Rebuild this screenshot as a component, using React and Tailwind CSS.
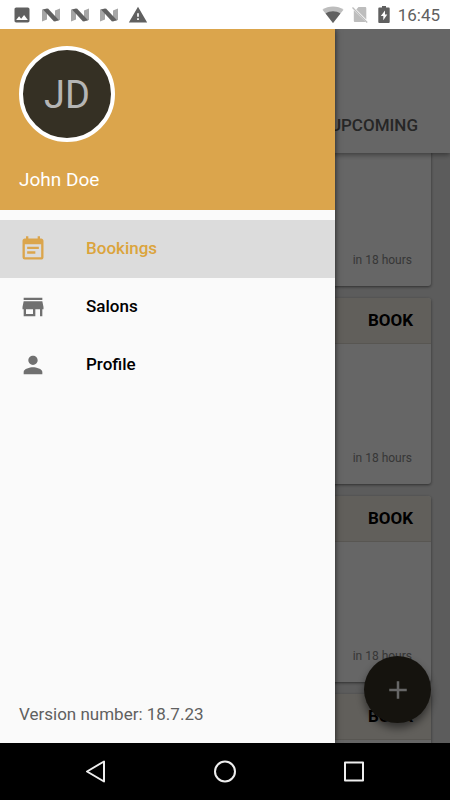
import { MdAdd, MdEventNote, MdImage, MdPerson, MdStore, MdWarning } from "react-icons/md";

function NIcon() {
  return (
    <svg viewBox="0 0 18 14" className="h-[14px] w-[18px]" aria-hidden="true">
      <path d="M0 1.500 5 .5V11.500L0 13.500zM13 2.500 18 .5V12l-5 1.500z" fill="#a6a6a6" />
      <path d="M1 1.500 6 .5 17 12.200l-5 1.300z" fill="#606060" />
    </svg>
  );
}

function StatusBar() {
  return (
    <header className="flex h-[29px] shrink-0 items-center justify-between bg-white pr-[10px] pl-3 text-[#606060]">
      <div className="flex items-center gap-[10px]">
        <MdImage className="h-5 w-5" />
        <div className="flex gap-[11px]">
          <NIcon />
          <NIcon />
          <NIcon />
        </div>
        <MdWarning className="h-5 w-5" />
      </div>
      <div className="flex items-center gap-2">
        <svg viewBox="0 0 22 17" className="h-[17px] w-[22px]" aria-hidden="true">
          <path d="M.5 3.800C3.500 1.600 7 .5 11 .5s7.500 1.100 10.500 3.300L11 17z" fill="#bdbdbd" />
          <path d="M3.600 7.500C5.800 6 8.200 5.200 11 5.200s5.200.8 7.400 2.300L11 17z" fill="#606060" />
        </svg>
        <svg viewBox="0 0 16 17" className="h-[17px] w-4" aria-hidden="true">
          <path d="M4.300 3.400 6.500 1H13c.8 0 1.300.5 1.300 1.300v11.200zM1.800 4.200 13.800 16H3.100c-.8 0-1.300-.5-1.300-1.300z" fill="#bdbdbd" />
          <path d="M.5 1.500 15.200 16.500" stroke="#bdbdbd" strokeWidth="1.300" />
        </svg>
        <svg viewBox="0 0 12 17" className="ml-[2px] h-[17px] w-3" aria-hidden="true">
          <path d="M4 0h4v1.500h2.700c.5 0 1 .5 1 1V16c0 .5-.5 1-1 1H1.300c-.5 0-1-.5-1-1V2.500c0-.5.5-1 1-1H4z" fill="#606060" />
          <path d="M7 4.500 2.800 10h2.500v4.200L9.300 8.500H7z" fill="#fff" />
        </svg>
        <time className="text-[17px] leading-5">16:45</time>
      </div>
    </header>
  );
}

function BookingCard() {
  return (
    <article className="flex h-[186px] shrink-0 flex-col rounded-[3px] bg-white shadow-[0_1px_3px_rgba(0,0,0,0.5)]">
      <div className="flex h-[46px] items-center justify-end rounded-t-[3px] border-b border-[#dcd8ce] bg-[#f3eee4] pr-[18px]">
        <button type="button" className="pb-[2px] text-[17px] leading-5 font-bold text-black">BOOK</button>
      </div>
      <p className="mt-auto pr-[19px] pb-[17px] text-right text-xs leading-[18px] text-[#8a8a8a]">in 18 hours</p>
    </article>
  );
}

function BookingsPage() {
  return (
    <main className="flex h-full flex-col bg-[#e6e6e6]">
      <div className="z-10 flex h-[124px] shrink-0 items-end justify-end bg-white pr-8 pb-4 shadow-[0_2px_5px_rgba(0,0,0,0.4)]">
        <button type="button" className="text-[17px] leading-6 font-medium text-[#606060]">UPCOMING</button>
      </div>
      <div className="flex min-h-0 flex-1 flex-col justify-start overflow-hidden px-[19px]">
        <div className="-mt-[53px] flex flex-col gap-[12px]">
          <BookingCard />
          <BookingCard />
          <BookingCard />
          <BookingCard />
        </div>
      </div>
      <button type="button" aria-label="Add booking" className="absolute right-[19px] bottom-[20px] z-10 flex h-[67px] w-[67px] items-center justify-center rounded-full bg-[#353024] text-white shadow-[0_5px_9px_rgba(0,0,0,0.5)]">
        <MdAdd className="h-[30px] w-[30px]" />
      </button>
    </main>
  );
}

const links = [
  { label: "Bookings", Icon: MdEventNote, active: true },
  { label: "Salons", Icon: MdStore, active: false },
  { label: "Profile", Icon: MdPerson, active: false },
];

function Drawer() {
  return (
    <aside className="absolute inset-y-0 left-0 z-30 flex w-[335px] flex-col bg-[#fafafa] shadow-[0_0_6px_rgba(0,0,0,0.7)]">
      <div className="flex h-[181px] shrink-0 flex-col justify-between bg-[#dba54c] px-[19px] pt-[17px] pb-[18px]">
        <div className="flex h-24 w-24 items-center justify-center rounded-full border-4 border-white bg-[#353024] pt-[2px] text-[38px] leading-none text-[#b5b5b5]">JD</div>
        <p className="text-[19px] leading-6 text-white">John Doe</p>
      </div>
      <nav className="pt-[10px]">
        {links.map(({ label, Icon, active }) => (
          <a
            key={label}
            href="#"
            aria-current={active ? "page" : undefined}
            className={
              active
                ? "flex h-[58px] items-center gap-[39px] bg-[#dcdcdc] px-[19px] text-[17px] font-medium text-[#dba43c]"
                : "flex h-[58px] items-center gap-[39px] px-[19px] text-[17px] font-medium text-black"
            }
          >
            <Icon className={active ? "h-7 w-7 text-[#dba54c]" : "h-7 w-7 text-[#707070]"} />
            {label}
          </a>
        ))}
      </nav>
      <p className="mt-auto px-[19px] pb-[17px] text-[17px] leading-6 text-[#606060]">Version number: 18.7.23</p>
    </aside>
  );
}

function NavigationBar() {
  return (
    <footer className="flex h-[57px] shrink-0 items-center justify-center gap-[101px] bg-black text-[#eeeeee]">
      <button type="button" aria-label="Back">
        <svg viewBox="0 0 28 28" className="h-7 w-7" fill="none" stroke="currentColor" strokeWidth="2" strokeLinejoin="round">
          <path d="M22 3.500v20L5 13.500z" />
        </svg>
      </button>
      <button type="button" aria-label="Home">
        <svg viewBox="0 0 28 28" className="h-7 w-7" fill="none" stroke="currentColor" strokeWidth="2">
          <circle cx="14" cy="13.500" r="10" />
        </svg>
      </button>
      <button type="button" aria-label="Recent apps">
        <svg viewBox="0 0 28 28" className="h-7 w-7" fill="none" stroke="currentColor" strokeWidth="2" strokeLinejoin="round">
          <path d="M5 4.500h18v18H5z" />
        </svg>
      </button>
    </footer>
  );
}

export default function App() {
  return (
    <div className="flex h-screen flex-col overflow-hidden font-[Roboto,sans-serif]">
      <StatusBar />
      <div className="relative min-h-0 flex-1 overflow-hidden">
        <BookingsPage />
        <div className="absolute inset-0 z-20 bg-black/60" />
        <Drawer />
      </div>
      <NavigationBar />
    </div>
  );
}
